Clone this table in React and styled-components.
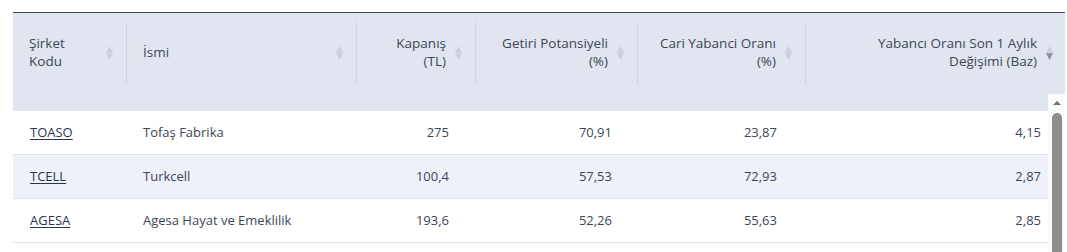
import React from "react";
import styled, { createGlobalStyle } from "styled-components";

const columns = [
  { key: "code", title: ["Şirket", "Kodu"], align: "left" },
  { key: "name", title: ["İsmi"], align: "left" },
  { key: "close", title: ["Kapanış", "(TL)"], align: "right" },
  { key: "potential", title: ["Getiri Potansiyeli", "(%)"], align: "right" },
  { key: "foreign", title: ["Cari Yabanci Oranı", "(%)"], align: "right" },
  {
    key: "change",
    title: ["Yabancı Oranı Son 1 Aylık", "Değişimi (Baz)"],
    align: "right",
    sorted: "desc",
  },
];

const rows = [
  { code: "TOASO", name: "Tofaş Fabrika", close: "275", potential: "70,91", foreign: "23,87", change: "4,15" },
  { code: "TCELL", name: "Turkcell", close: "100,4", potential: "57,53", foreign: "72,93", change: "2,87" },
  { code: "AGESA", name: "Agesa Hayat ve Emeklilik", close: "193,6", potential: "52,26", foreign: "55,63", change: "2,85" },
];

function SortIcon({ sorted }) {
  const up = sorted === "asc" ? "#8a909c" : "#c9cfdc";
  const down = sorted === "desc" ? "#8a909c" : "#c9cfdc";
  return (
    <svg width="7" height="14" viewBox="0 0 7 14">
      <polygon points="3.5,0 7,6.8 0,6.8" fill={up} />
      <polygon points="0,7.2 7,7.2 3.5,14" fill={down} />
    </svg>
  );
}

export default function App() {
  return (
    <>
      <GlobalStyle />
      <Page>
        <Table>
          <Head>
            {columns.map((col, i) => (
              <HeadCell key={col.key} $sep={i > 0} $last={i === columns.length - 1}>
                <HeadText $align={col.align}>
                  {col.title.map((line) => (
                    <div key={line}>{line}</div>
                  ))}
                </HeadText>
                <SortIcon sorted={col.sorted} />
              </HeadCell>
            ))}
          </Head>
          <BodyArea>
            <BodyRows>
              <SizingRow />
              {rows.map((row, r) => (
                <Row key={row.code} $striped={r % 2 === 1}>
                  {columns.map((col) => (
                    <Cell key={col.key} $align={col.align}>
                      {col.key === "code" ? <CodeLink href="#">{row.code}</CodeLink> : row[col.key]}
                    </Cell>
                  ))}
                </Row>
              ))}
            </BodyRows>
            <ScrollBar>
              <ScrollArrow />
              <ScrollThumb />
            </ScrollBar>
          </BodyArea>
        </Table>
      </Page>
    </>
  );
}

const GlobalStyle = createGlobalStyle`
  html, body {
    margin: 0;
    overflow: hidden;
    background: #fff;
  }
  body {
    font-family: "Open Sans", "Liberation Sans", sans-serif;
    color: #3d4656;
  }
  * {
    box-sizing: border-box;
  }
`;

const Page = styled.div`
  padding: 12px 2px 0 13px;
`;

const Table = styled.div`
  border-top: 1px solid #3a4152;
`;

const Head = styled.div`
  display: grid;
  grid-template-columns: 113px 230px 119px 162px 168px 1fr;
  align-items: start;
  height: 81px;
  background: #e1e5ef;
`;

const HeadCell = styled.div`
  display: flex;
  align-items: center;
  gap: 9px;
  height: 62px;
  margin-top: 9px;
  padding: 0 ${({ $last }) => ($last ? "12px" : "13px")} 0 16px;
  border-left: ${({ $sep }) => ($sep ? "1px solid #cdd3e0" : "none")};
`;

const HeadText = styled.div`
  flex: 1;
  text-align: ${({ $align }) => $align};
  font-size: 13.5px;
  line-height: 18px;
  color: #3d4656;
  margin-top: -2px;
`;

const BodyArea = styled.div`
  display: flex;
  height: 158px;
  overflow: hidden;
`;

const BodyRows = styled.div`
  flex: 1;
`;

const SizingRow = styled.div`
  height: 17px;
  background: #e1e5ef;
`;

const Row = styled.div`
  display: grid;
  grid-template-columns: 113px 230px 100px 163px 165px 1fr;
  height: 44px;
  border-bottom: 1px solid #dde2ed;
  background: ${({ $striped }) => ($striped ? "#eff1f8" : "#fff")};
`;

const Cell = styled.div`
  display: flex;
  align-items: center;
  justify-content: ${({ $align }) => ($align === "right" ? "flex-end" : "flex-start")};
  padding: 0 7px 1px 17px;
  font-size: 13px;
  color: #3d4656;
  white-space: nowrap;
`;

const CodeLink = styled.a`
  color: #2b3550;
  text-decoration: underline;
  text-underline-offset: 2px;
`;

const ScrollBar = styled.div`
  width: 17px;
  display: flex;
  flex-direction: column;
  align-items: center;
  background: #fbfbfb;
`;

const ScrollArrow = styled.div`
  width: 17px;
  height: 17px;
  display: flex;
  align-items: center;
  justify-content: center;
  padding-top: 1px;

  &::before {
    content: "";
    border-left: 4px solid transparent;
    border-right: 4px solid transparent;
    border-bottom: 4px solid #6e6e6e;
  }
`;

const ScrollThumb = styled.div`
  flex: 1;
  width: 10px;
  margin: 2px 0 0 1px;
  border-radius: 5px 5px 0 0;
  background: #8d8d8d;
`;
